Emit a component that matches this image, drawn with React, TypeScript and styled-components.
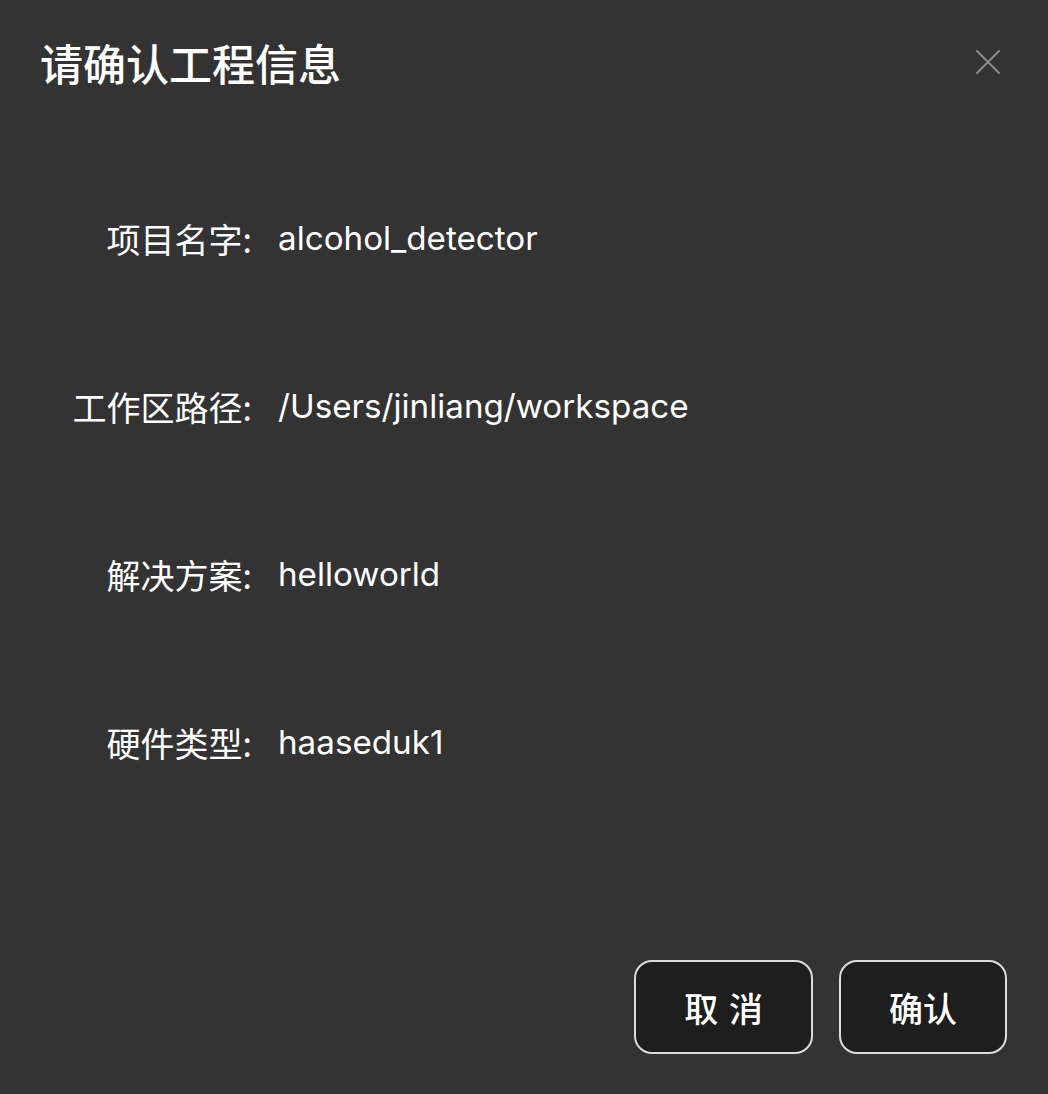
import React from "react";
import styled, { createGlobalStyle } from "styled-components";

const Global = createGlobalStyle`
  html, body { margin: 0; padding: 0; background: #333333; }
  body { font-family: Inter, "Noto Sans CJK SC", sans-serif; color: #ffffff; }
`;

const Dialog = styled.div`
  box-sizing: border-box;
  width: 1048px;
  height: 1094px;
  background: #333333;
  display: flex;
  flex-direction: column;
  padding: 0 41px 40px 40px;
`;

const Header = styled.div`
  height: 124px;
  display: flex;
  align-items: center;
  justify-content: space-between;
`;

const Title = styled.h1`
  margin: 0;
  font-family: "Noto Sans CJK SC", sans-serif;
  font-size: 43px;
  font-weight: 500;
  line-height: 1;
  color: #ffffff;
`;

const CloseButton = styled.button`
  width: 40px;
  height: 40px;
  margin-right: -1px;
  padding: 0;
  border: none;
  background: transparent;
  display: flex;
  align-items: center;
  justify-content: center;
  cursor: pointer;
`;

const Rows = styled.div`
  margin-top: 31px;
  display: flex;
  flex-direction: column;
`;

const Row = styled.div`
  height: 168px;
  display: grid;
  grid-template-columns: 212px 1fr;
  column-gap: 26px;
  align-items: center;
  line-height: 1;
`;

const Label = styled.span`
  text-align: right;
  font-family: "Noto Sans CJK SC", sans-serif;
  font-size: 34px;
  white-space: nowrap;
`;

const Value = styled.span`
  font-family: Inter, "Noto Sans CJK SC", sans-serif;
  font-size: 33.2px;
`;

const Footer = styled.div`
  margin-top: auto;
  display: flex;
  justify-content: flex-end;
  gap: 26px;
`;

const Button = styled.button`
  box-sizing: border-box;
  height: 94px;
  padding: 0 48px;
  border: 2px solid #dcdcdc;
  border-radius: 18px;
  background: #1e1e1e;
  color: #ffffff;
  font-family: "Noto Sans CJK SC", sans-serif;
  font-size: 34px;
  font-weight: 500;
  word-spacing: 3px;
  white-space: pre;
  cursor: pointer;
`;

const rows: [string, string][] = [
  ["项目名字:", "alcohol_detector"],
  ["工作区路径:", "/Users/jinliang/workspace"],
  ["解决方案:", "helloworld"],
  ["硬件类型:", "haaseduk1"],
];

export default function App() {
  return (
    <>
      <Global />
      <Dialog>
        <Header>
          <Title>请确认工程信息</Title>
          <CloseButton aria-label="关闭">
            <svg width="24" height="24" viewBox="0 0 24 24">
              <path d="M1 1 L23 23 M23 1 L1 23" stroke="#8c8c8c" strokeWidth="2" strokeLinecap="round" />
            </svg>
          </CloseButton>
        </Header>
        <Rows>
          {rows.map(([l, v]) => (
            <Row key={l}>
              <Label>{l}</Label>
              <Value>{v}</Value>
            </Row>
          ))}
        </Rows>
        <Footer>
          <Button>取 消</Button>
          <Button>确认</Button>
        </Footer>
      </Dialog>
    </>
  );
}
